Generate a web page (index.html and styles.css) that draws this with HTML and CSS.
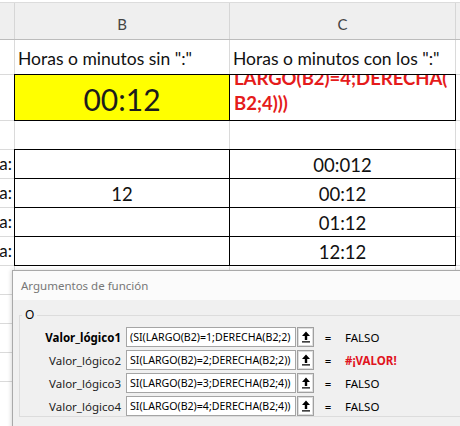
FILE: index.html
```html
<!DOCTYPE html>
<html lang="es">
<head>
    <meta charset="UTF-8">
    <title>Horas o minutos</title>
    <link rel="stylesheet" href="styles.css">
</head>
<body>

    <div class="hdr">
        <div class="hc"></div>
        <div class="hc">B</div>
        <div class="hc">C</div>
        <div class="hc"></div>
    </div>

    <div class="grid">
        <!-- fila 1 -->
        <div class="c"></div>
        <div class="c title-txt">Horas o minutos sin ":"</div>
        <div class="c title-txt over">Horas o minutos con los ":"</div>
        <div class="c"></div>
        <!-- fila 2 -->
        <div class="c"></div>
        <div class="c box yellow">00:12</div>
        <div class="c box formula">
            <span>LARGO(B2)=4;DERECHA(</span>
            <span>B2;4)))</span>
        </div>
        <div class="c"></div>
        <!-- fila 3 -->
        <div class="c"></div><div class="c"></div><div class="c"></div><div class="c"></div>
        <!-- filas 4-7 -->
        <div class="c lab">Hora:</div>
        <div class="c box mid"></div>
        <div class="c box mid">00:012</div>
        <div class="c"></div>

        <div class="c lab">Hora:</div>
        <div class="c box mid">12</div>
        <div class="c box mid">00:12</div>
        <div class="c"></div>

        <div class="c lab">Hora:</div>
        <div class="c box mid"></div>
        <div class="c box mid">01:12</div>
        <div class="c"></div>

        <div class="c lab">Hora:</div>
        <div class="c box mid"></div>
        <div class="c box mid">12:12</div>
        <div class="c"></div>
        <!-- resto -->
        <div class="c"></div><div class="c"></div><div class="c"></div><div class="c"></div>
        <div class="c"></div><div class="c"></div><div class="c"></div><div class="c"></div>
        <div class="c"></div><div class="c"></div><div class="c"></div><div class="c"></div>
        <div class="c"></div><div class="c"></div><div class="c"></div><div class="c"></div>
        <div class="c"></div><div class="c"></div><div class="c"></div><div class="c"></div>
    </div>

    <div class="dialog">
        <div class="dlg-title">Argumentos de función</div>
        <div class="dlg-body">
            <fieldset>
                <legend>O</legend>
                <div class="args">
                    <div class="lbl bold">Valor_lógico1</div>
                    <div class="inp">(SI(LARGO(B2)=1;DERECHA(B2;2)</div>
                    <div class="btn"><svg width="10" height="12" viewBox="0 0 10 12"><path d="M5 0.5L1 5H3.8V9H6.2V5H9Z M1 10.2H9V11.6H1Z" fill="#000"/></svg></div>
                    <div class="eq">=</div>
                    <div class="val">FALSO</div>

                    <div class="lbl">Valor_lógico2</div>
                    <div class="inp">SI(LARGO(B2)=2;DERECHA(B2;2))</div>
                    <div class="btn"><svg width="10" height="12" viewBox="0 0 10 12"><path d="M5 0.5L1 5H3.8V9H6.2V5H9Z M1 10.2H9V11.6H1Z" fill="#000"/></svg></div>
                    <div class="eq">=</div>
                    <div class="val err">#¡VALOR!</div>

                    <div class="lbl">Valor_lógico3</div>
                    <div class="inp">SI(LARGO(B2)=3;DERECHA(B2;4))</div>
                    <div class="btn"><svg width="10" height="12" viewBox="0 0 10 12"><path d="M5 0.5L1 5H3.8V9H6.2V5H9Z M1 10.2H9V11.6H1Z" fill="#000"/></svg></div>
                    <div class="eq">=</div>
                    <div class="val">FALSO</div>

                    <div class="lbl">Valor_lógico4</div>
                    <div class="inp">SI(LARGO(B2)=4;DERECHA(B2;4))</div>
                    <div class="btn"><svg width="10" height="12" viewBox="0 0 10 12"><path d="M5 0.5L1 5H3.8V9H6.2V5H9Z M1 10.2H9V11.6H1Z" fill="#000"/></svg></div>
                    <div class="eq">=</div>
                    <div class="val">FALSO</div>
                </div>
            </fieldset>
        </div>
    </div>

</body>
</html>
```
FILE: styles.css
```css
body { margin: 0; width: 460px; height: 426px; overflow: hidden; position: relative; background: #fff; font-family: Lato, "Liberation Sans", sans-serif; }

/* hoja */
.hdr {
    display: grid; grid-template-columns: 14px 214px 225px 1fr; column-gap: 1px;
    height: 36px; margin-top: 2px; background: #d6d6d6;
    border-top: 1px solid #dcdcdc; border-bottom: 1px solid #bcbcbc;
}
.hc { background: #efefef; display: flex; align-items: center; justify-content: center; padding-top: 6px; font-size: 15px; color: #444; }

.grid {
    display: grid; grid-template-columns: 14px 214px 225px 1fr;
    grid-template-rows: 34px 45px 28px; grid-auto-rows: 28px; gap: 1px; background: #dadada;
}
.c { background: #fff; display: flex; align-items: flex-end; white-space: nowrap; font-size: 18.5px; color: #111; }
.title-txt { font-size: 17.5px; padding: 0 0 5px 3px; }
.over { position: relative; z-index: 1; }
.lab { justify-content: flex-end; overflow: hidden; padding: 0 2px 4px 0; font-size: 17px; }
.box { box-shadow: 0 0 0 1px #000; }
.mid { justify-content: center; align-items: center; padding-top: 2px; }
.yellow { background: #ffff00; justify-content: center; align-items: center; padding-top: 3px; font-size: 30px; color: #1c1c1c; }
.formula {
    flex-direction: column; justify-content: flex-end; align-items: flex-start; overflow: hidden;
    padding: 0 0 4px 4px; font-size: 18.5px; line-height: 25px; font-weight: bold; color: #e51b1b;
}

/* dialogo */
.dialog {
    position: absolute; left: 12px; top: 270px; width: 470px; height: 170px;
    border: 1px solid #a9a9a9; box-shadow: -1px 0 4px rgba(0,0,0,.15); background: #f0f0f0;
    font-family: "Noto Sans", "Open Sans", sans-serif; font-size: 11.5px; color: #000;
}
.dlg-title { height: 29px; background: #fbfbfb; color: #777; font-size: 11.5px; padding-left: 8px; display: flex; align-items: center; }
.dlg-body { padding: 7px 0 0 6px; }
fieldset { margin: 0; border: 1px solid #dcdcdc; border-right: none; padding: 4px 0 0 0; min-width: 0; }
legend { padding: 0 3px; margin-left: 2px; font-size: 12px; line-height: 16px; }
.args { display: grid; grid-template-columns: 106px 170px 19px 26px auto; grid-auto-rows: 20px; row-gap: 3px; align-items: center; }
.lbl { text-align: right; padding-right: 5px; color: #222; }
.bold { font-weight: bold; color: #000; }
.inp {
    height: 20px; box-sizing: border-box; border: 1px solid #a5a5a5; background: #fff;
    padding-left: 3px; overflow: hidden; white-space: nowrap; font-size: 10.6px; line-height: 18px;
}
.btn {
    width: 17px; height: 20px; box-sizing: border-box; margin-left: 1px;
    border: 1px solid #a0a0a0; box-shadow: inset 0 0 0 1px #dedede; background: #fff;
    display: flex; align-items: center; justify-content: center;
}
.eq { text-align: center; }
.val { padding-left: 4px; }
.err { color: #e0141e; font-weight: bold; }
```
